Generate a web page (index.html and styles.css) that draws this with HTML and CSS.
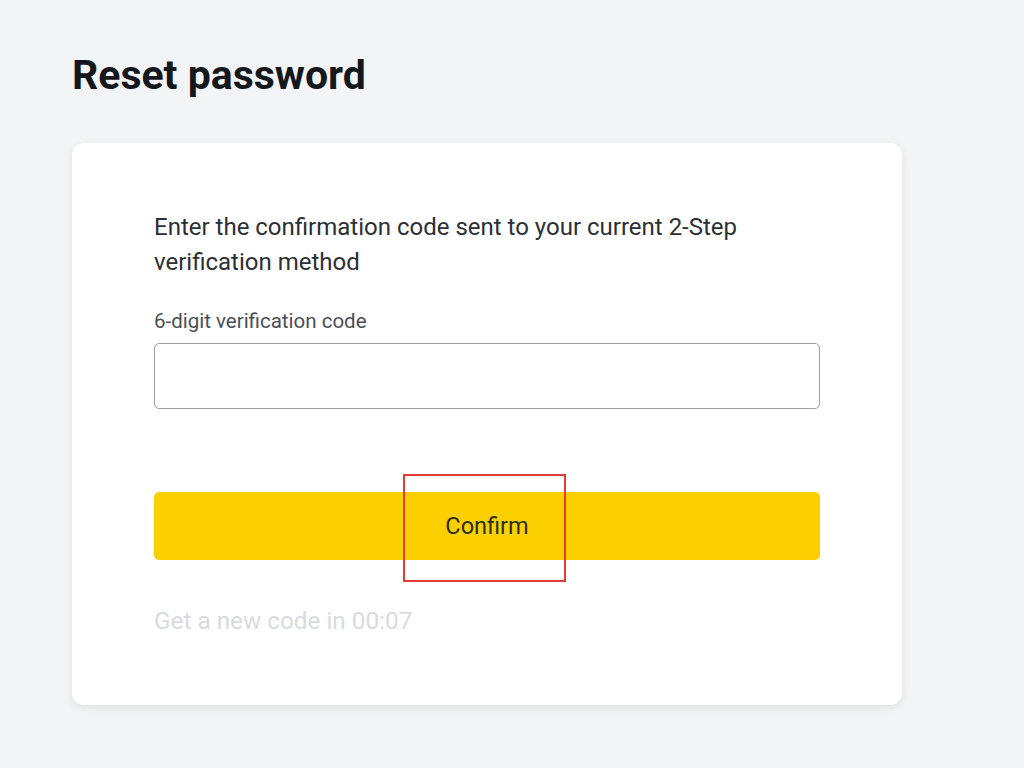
FILE: index.html
```html
<!DOCTYPE html>
<html lang="en">
<head>
<meta charset="utf-8">
<title>Reset password</title>
<link rel="stylesheet" href="styles.css">
</head>
<body>
<main class="page">
  <h1 class="title">Reset password</h1>
  <section class="card">
    <p class="intro">Enter the confirmation code sent to your current 2-Step verification method</p>
    <label class="label" for="code">6-digit verification code</label>
    <input class="field" id="code" type="text">
    <div class="btn-wrap">
      <button class="btn" type="button">Confirm</button>
      <span class="highlight"></span>
    </div>
    <p class="timer">Get a new code in 00:07</p>
  </section>
</main>
</body>
</html>
```

FILE: styles.css
```css
html, body {
  margin: 0;
  padding: 0;
}
body {
  background: #f3f4f6;
  font-family: Roboto, "Liberation Sans", Arial, sans-serif;
  color: #1e2329;
  width: 1024px;
  height: 768px;
  overflow: hidden;
}
.page {
  padding: 51px 0 0 72px;
}
.title {
  margin: 0;
  font-size: 41px;
  font-weight: 700;
  line-height: 48px;
  color: #14171c;
}
.card {
  margin-top: 44px;
  width: 830px;
  height: 562px;
  box-sizing: border-box;
  background: #fff;
  border-radius: 12px;
  box-shadow: 0 3px 10px rgba(0, 0, 0, 0.08);
  padding: 67px 82px 0 82px;
}
.intro {
  margin: 0;
  font-size: 24px;
  line-height: 35px;
  color: #2b2f36;
  width: 600px;
}
.label {
  display: block;
  margin-top: 29px;
  font-size: 20.5px;
  line-height: 24px;
  color: #4a4f57;
}
.field {
  display: block;
  margin-top: 10px;
  width: 100%;
  height: 66px;
  box-sizing: border-box;
  border: 1px solid #a0a0a0;
  border-radius: 5px;
  background: #fff;
  outline: none;
  font-family: inherit;
  font-size: 20px;
  padding: 0 16px;
}
.btn-wrap {
  position: relative;
  margin-top: 83px;
}
.btn {
  display: block;
  width: 100%;
  height: 68px;
  border: 0;
  border-radius: 5px;
  background: #fcd000;
  font-family: inherit;
  font-size: 23.5px;
  color: #2b2f1a;
  cursor: pointer;
}
.highlight {
  position: absolute;
  left: 249px;
  top: -18px;
  width: 163px;
  height: 108px;
  box-sizing: border-box;
  border: 2px solid #e8393a;
  pointer-events: none;
}
.timer {
  margin: 46px 0 0;
  font-size: 24.3px;
  line-height: 30px;
  color: #d9dbde;
}
```
